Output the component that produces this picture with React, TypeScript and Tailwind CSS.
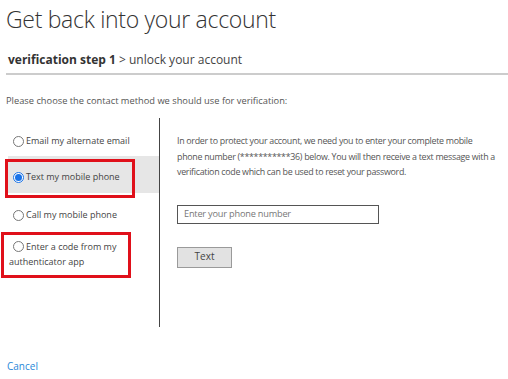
import React from "react";

function Radio({ checked }: { checked?: boolean }) {
  return checked ? (
    <span className="inline-flex items-center justify-center w-[11px] h-[11px] rounded-full border border-[#1a73e8] bg-white shrink-0">
      <span className="w-[7px] h-[7px] rounded-full bg-[#1a73e8]" />
    </span>
  ) : (
    <span className="inline-block w-[11px] h-[11px] rounded-full border border-[#777] bg-white shrink-0" />
  );
}

export default function App() {
  return (
    <div className="relative w-[508px] h-[379px] bg-white overflow-hidden font-['Open_Sans',sans-serif] text-[#333]">
      <div className="pl-[6px] pt-[4px] text-[23px] leading-[30px] font-light text-[#333] tracking-[-0.3px]">
        Get back into your account
      </div>
      <div className="pl-[8px] mt-[18px] text-[12px] leading-[16px] text-[#333]">
        <span className="font-bold">verification step 1</span>
        <span className="text-[#444]"> &gt; unlock your account</span>
      </div>
      <div className="ml-[6px] mt-[5px] h-[2px] bg-[#cccccc]" />
      <div className="pl-[6px] mt-[19px] text-[9.3px] leading-[14px] text-[#555]">
        Please choose the contact method we should use for verification:
      </div>
      <div className="flex mt-[10px]">
        <div className="ml-[8px] w-[152px] h-[209px] border-r border-[#444] flex flex-col text-[9px] text-[#444]">
          <div className="h-[38px] pt-[18px] pl-[5px] flex items-start gap-[2px] leading-[14px]">
            <Radio />
            <span className="-mt-[2px]">Email my alternate email</span>
          </div>
          <div className="h-[37px] pt-[16px] pl-[5px] flex items-start gap-[2px] leading-[14px] bg-[#e6e6e6]">
            <Radio checked />
            <span className="-mt-[2px]">Text my mobile phone</span>
          </div>
          <div className="h-[37px] pt-[17px] pl-[5px] flex items-start gap-[2px] leading-[14px]">
            <Radio />
            <span className="-mt-[2px]">Call my mobile phone</span>
          </div>
          <div className="pt-[11px] pl-[1px] leading-[15px]">
            <div className="flex items-start gap-[2px] pl-[4px]">
              <Radio />
              <span className="-mt-[2px]">Enter a code from my</span>
            </div>
            <div>authenticator app</div>
          </div>
        </div>
        <div className="pl-[17px] pt-[15px] flex-1 min-w-0 text-[8.9px] leading-[15.5px] text-[#555] tracking-[-0.3px]">
          <p className="whitespace-nowrap">
            In order to protect your account, we need you to enter your complete mobile
            <br />
            phone number (***********36) below. You will then receive a text message with a
            <br />
            verification code which can be used to reset your password.
          </p>
          <div className="mt-[25px] w-[202px] h-[19px] border border-[#555] flex items-center px-[6px] text-[9.2px] text-[#777] tracking-[-0.2px]">
            Enter your phone number
          </div>
          <button className="mt-[23px] w-[55px] h-[21px] bg-[#e2e2e2] border border-[#9a9a9a] text-[10px] text-[#444] tracking-normal flex items-center justify-center">
            Text
          </button>
        </div>
      </div>
      <div className="pl-[7px] mt-[32px] text-[10px] leading-[14px] text-[#2a87d8]">Cancel</div>

      <div className="absolute left-[5px] top-[159px] w-[130px] h-[39px] border-[3px] border-[#e0101a] pointer-events-none" />
      <div className="absolute left-[1px] top-[232px] w-[130px] h-[46px] border-[3px] border-[#e0101a] pointer-events-none" />
    </div>
  );
}
